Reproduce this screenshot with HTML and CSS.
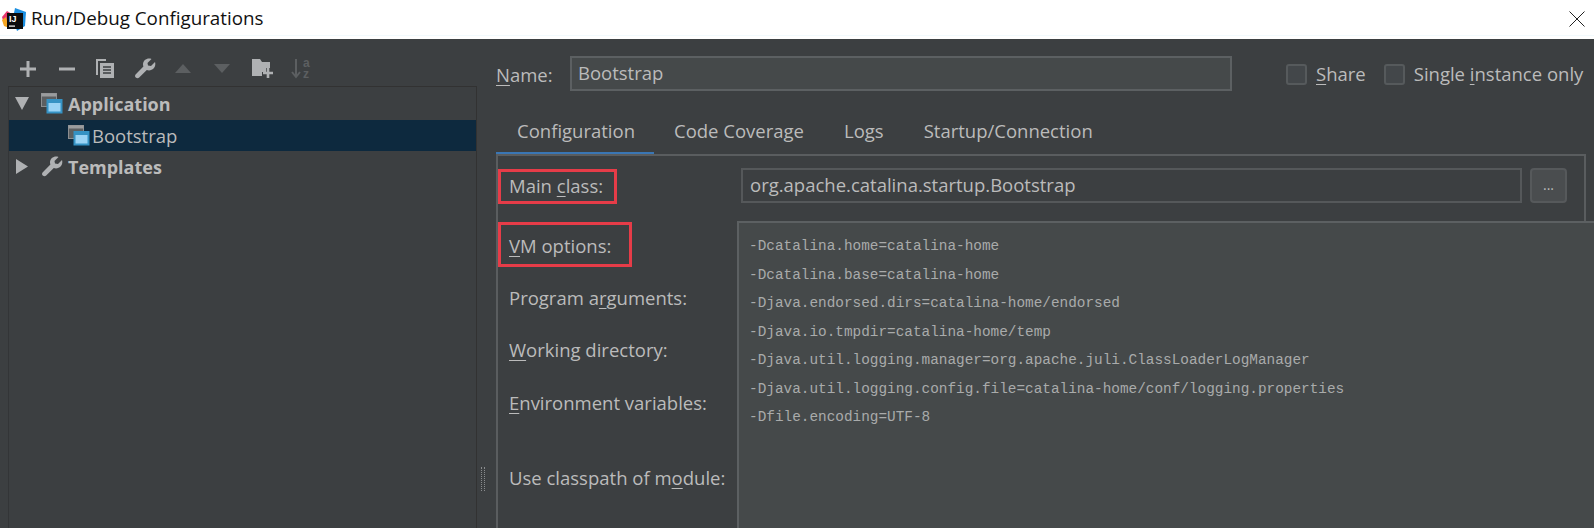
FILE: index.html
```html
<!DOCTYPE html>
<html lang="en">
<head>
<meta charset="utf-8">
<title>Run/Debug Configurations</title>
<link rel="stylesheet" href="styles.css">
</head>
<body>
<header class="titlebar">
  <svg class="logo" width="26" height="26" viewBox="0 0 26 26">
    <path d="M1 11 L6 5 L11 8 L9 20 L3 18Z" fill="#e8386f"/>
    <path d="M1 14 L5 11 L8 22 L3 20Z" fill="#f5a623"/>
    <path d="M14 2 L25 6 L24 20 L16 25 L12 12Z" fill="#1c8fe0"/>
    <rect x="6" y="7" width="16" height="16" fill="#0c0c0c"/>
    <text x="8" y="16" class="logo-text">IJ</text>
    <rect x="8" y="19.5" width="6" height="1.2" fill="#fff"/>
  </svg>
  <span class="title">Run/Debug Configurations</span>
  <svg class="close" width="16" height="16" viewBox="0 0 16 16"><path d="M0.5 0.5 L15.5 15.5 M15.5 0.5 L0.5 15.5" stroke="#222" stroke-width="1" fill="none"/></svg>
</header>

<main class="body">
  <aside class="left">
    <div class="toolbar">
      <svg class="tool t-plus" width="16" height="16" viewBox="0 0 16 16"><path d="M8 0V16M0 8H16" stroke="#afb1b3" stroke-width="3"/></svg>
      <svg class="tool t-minus" width="16" height="16" viewBox="0 0 16 16"><path d="M0 8H16" stroke="#afb1b3" stroke-width="3"/></svg>
      <svg class="tool t-copy" width="19" height="20" viewBox="0 0 19 20"><path d="M0 0H10V2H2V16H0Z" fill="#afb1b3"/><path d="M4 4H18V19H4Z" fill="#afb1b3"/><path d="M7 8H15M7 11H15M7 14H15" stroke="#3c3f41" stroke-width="1.4"/></svg>
      <svg class="tool t-wrench" width="21" height="21" viewBox="0 0 21 21"><path d="M20 4 L16 8 L13 7.5 L12.5 5 L16.5 1 C12.5 -0.5 8 2 8 6.5 C8 7.3 8.2 8 8.4 8.6 L0.8 16.2 C-0.2 17.2 -0.2 18.6 0.8 19.6 C1.8 20.6 3.2 20.6 4.2 19.6 L11.8 12 C12.5 12.3 13.2 12.4 14 12.4 C18.5 12.4 21.3 8 20 4Z" fill="#afb1b3"/></svg>
      <svg class="tool t-up" width="16" height="9" viewBox="0 0 16 9"><path d="M8 0L16 9H0Z" fill="#5c5f61"/></svg>
      <svg class="tool t-down" width="16" height="9" viewBox="0 0 16 9"><path d="M0 0H16L8 9Z" fill="#5c5f61"/></svg>
      <svg class="tool t-folder" width="22" height="19" viewBox="0 0 22 19"><path d="M0 0H8L10 3H18V9H14V13H10V17H0Z" fill="#afb1b3"/><path d="M16 9V19M11 14H21" stroke="#afb1b3" stroke-width="2.6"/></svg>
      <svg class="tool t-sort" width="21" height="28" viewBox="0 -4 21 28"><path d="M5 0V17M1 13L5 18L9 13" stroke="#5c5f61" stroke-width="2" fill="none"/><text x="12" y="8" class="sort-text">a</text><text x="12" y="19" class="sort-text">z</text></svg>
    </div>
    <div class="tree">
      <div class="node">
        <svg class="arrow" width="14" height="13" viewBox="0 0 14 13"><path d="M0 0H14L7 13Z" fill="#afb1b3"/></svg>
        <svg class="app-icon" width="22" height="21" viewBox="0 0 22 21"><rect x="0.5" y="0.5" width="15" height="13" fill="#5c5f61" stroke="#8c8e90"/><rect x="0.5" y="0.5" width="15" height="3" fill="#9a9c9e"/><rect x="5.5" y="6" width="16" height="14.5" fill="#3592c4"/><rect x="7.5" y="10" width="12" height="8.5" fill="#9ad3f5"/></svg>
        <span class="strong">Application</span>
      </div>
      <div class="node selected">
        <svg class="app-icon" width="22" height="21" viewBox="0 0 22 21"><rect x="0.5" y="0.5" width="15" height="13" fill="#5c5f61" stroke="#8c8e90"/><rect x="0.5" y="0.5" width="15" height="3" fill="#9a9c9e"/><rect x="5.5" y="6" width="16" height="14.5" fill="#3592c4"/><rect x="7.5" y="10" width="12" height="8.5" fill="#9ad3f5"/></svg>
        <span>Bootstrap</span>
      </div>
      <div class="node">
        <svg class="arrow arrow-right" width="12" height="15" viewBox="0 0 12 15"><path d="M0 0L12 7.5L0 15Z" fill="#afb1b3"/></svg>
        <svg class="tmpl-icon" width="21" height="21" viewBox="0 0 21 21"><path d="M20 4 L16 8 L13 7.5 L12.5 5 L16.5 1 C12.5 -0.5 8 2 8 6.5 C8 7.3 8.2 8 8.4 8.6 L0.8 16.2 C-0.2 17.2 -0.2 18.6 0.8 19.6 C1.8 20.6 3.2 20.6 4.2 19.6 L11.8 12 C12.5 12.3 13.2 12.4 14 12.4 C18.5 12.4 21.3 8 20 4Z" fill="#afb1b3"/></svg>
        <span class="strong">Templates</span>
      </div>
    </div>
  </aside>

  <div class="splitter"><span class="grip"></span></div>

  <section class="right">
    <div class="name-row">
      <label class="name-label"><u>N</u>ame:</label>
      <div class="name-input">Bootstrap</div>
      <span class="check check-first"></span><span class="check-label"><u>S</u>hare</span>
      <span class="check check-second"></span><span class="check-label">Single <u>i</u>nstance only</span>
    </div>

    <nav class="tabs">
      <span class="tab active">Configuration</span>
      <span class="tab">Code Coverage</span>
      <span class="tab">Logs</span>
      <span class="tab">Startup/Connection</span>
    </nav>

    <div class="panel">
      <div class="main-row">
        <span class="field-label">Main <u>c</u>lass:</span>
        <div class="class-input">org.apache.catalina.startup.Bootstrap</div>
        <span class="browse">...</span>
      </div>
      <div class="fields">
        <div class="field-row"><span class="field-label"><u>V</u>M options:</span></div>
        <div class="field-row"><span class="field-label">Program a<u>r</u>guments:</span></div>
        <div class="field-row field-row-tall"><span class="field-label"><u>W</u>orking directory:</span></div>
        <div class="field-row"><span class="field-label"><u>E</u>nvironment variables:</span></div>
        <div class="field-row field-row-gap"><span class="field-label">Use classpath of m<u>o</u>dule:</span></div>
      </div>
    </div>

    <div class="mark mark-main"></div>
    <div class="mark mark-vm"></div>

    <div class="vm-popup">
      <div>-Dcatalina.home=catalina-home</div>
      <div>-Dcatalina.base=catalina-home</div>
      <div>-Djava.endorsed.dirs=catalina-home/endorsed</div>
      <div>-Djava.io.tmpdir=catalina-home/temp</div>
      <div>-Djava.util.logging.manager=org.apache.juli.ClassLoaderLogManager</div>
      <div>-Djava.util.logging.config.file=catalina-home/conf/logging.properties</div>
      <div>-Dfile.encoding=UTF-8</div>
    </div>
  </section>
</main>
</body>
</html>
```
FILE: styles.css
```css
* { box-sizing: border-box; }
html, body { margin: 0; padding: 0; height: 528px; overflow: hidden; }
body {
  width: 1594px;
  background: #3c3f41;
  color: #bbbbbb;
  font-family: "Open Sans", "Noto Sans", sans-serif;
  font-size: 18.5px;
  display: flex;
  flex-direction: column;
}
u { text-underline-offset: 3px; text-decoration-thickness: 1px; }

.titlebar {
  height: 39px;
  flex: none;
  background: #fff;
  border-bottom: 3px solid #fff;
  box-shadow: inset 0 -1px 0 #f2fafd;
  display: flex;
  align-items: center;
  color: #111;
}
.logo { margin-left: 1px; margin-top: 1px; flex: none; }
.logo-text { font: bold 9px "Liberation Sans", sans-serif; fill: #fff; }
.title { margin-left: 4px; font-size: 18.8px; }
.close { margin-left: auto; margin-right: 9px; margin-top: 1px; }

.body { flex: 1; display: flex; min-height: 0; }

.left { width: 477px; flex: none; padding-left: 8px; display: flex; flex-direction: column; }
.toolbar { height: 47px; flex: none; display: flex; align-items: center; padding-top: 12px; }
.tool { flex: none; }
.t-plus { margin-left: 12px; }
.t-minus { margin-left: 23px; }
.t-copy { margin-left: 21px; }
.t-wrench { margin-left: 20px; }
.t-up { margin-left: 19px; }
.t-down { margin-left: 23px; }
.t-folder { margin-left: 22px; }
.t-sort { margin-left: 17px; }
.sort-text { font: bold 12px "Liberation Sans", sans-serif; fill: #5c5f61; }

.tree { flex: 1; border: 1px solid #323232; border-bottom: 0; border-left-color: #333537; padding-top: 1px; }
.node { height: 31.5px; display: flex; align-items: center; color: #bbb; }
.strong { font-weight: 700; font-size: 18px; margin-left: 5px; }
.arrow { margin-left: 6px; }
.arrow-right { margin-left: 7px; }
.app-icon { margin-left: 12px; }
.tmpl-icon { margin-left: 14px; }
.selected { background: #0d293e; }
.selected .app-icon { margin-left: 59px; }
.selected span { margin-left: 2px; }

.splitter { width: 19px; flex: none; padding-top: 428px; padding-left: 4px; }
.grip { display: block; width: 4px; height: 24px; border-left: 1.5px dotted #8a8c8e; border-right: 1.5px dotted #8a8c8e; }

.right { flex: 1; min-width: 0; position: relative; display: flex; flex-direction: column; }

.name-row { height: 35px; margin-top: 17px; flex: none; display: flex; align-items: center; }
.name-label { width: 74px; flex: none; margin-top: 1px; }
.name-input {
  width: 662px;
  height: 35px;
  flex: none;
  background: #45494a;
  border: 2px solid #5c6062;
  padding-left: 6px;
  line-height: 29px;
}
.check {
  width: 21px;
  height: 21px;
  flex: none;
  border: 2px solid #565a5c;
  border-radius: 3px;
  background: #43474a;
  margin-top: 2px;
}
.check-first { margin-left: 54px; }
.check-second { margin-left: 18px; }
.check-label { margin-left: 9px; white-space: nowrap; }

.tabs { height: 46px; margin-top: 18px; flex: none; display: flex; }
.tab { padding: 0 20px; line-height: 44px; white-space: nowrap; }
.tabs .tab:first-child { padding: 0 19px 0 21px; }
.active { box-shadow: inset 0 -3px 0 #3a76b4; }

.panel {
  flex: 1;
  margin-right: 8px;
  margin-top: -1px;
  border: 2px solid #5a5d5f;
  border-bottom: 0;
  padding-top: 12px;
}
.main-row { display: flex; align-items: center; height: 35px; padding-right: 17px; }
.field-label { padding-left: 11px; white-space: nowrap; }
.main-row .field-label { width: 243px; flex: none; }
.class-input {
  flex: 1;
  height: 35px;
  border: 2px solid #55585a;
  padding-left: 7px;
  line-height: 29px;
}
.browse {
  width: 37px;
  height: 35px;
  flex: none;
  margin-left: 8px;
  border: 2px solid #56595b;
  border-radius: 4px;
  background: #4a4d4f;
  text-align: center;
  line-height: 29px;
  font-size: 14px;
}
.fields { padding-top: 16px; }
.field-row { height: 52px; display: flex; align-items: center; }
.field-row-tall { height: 53px; }
.field-row-gap { margin-top: 23px; }

.mark { position: absolute; left: 2px; border: 3px solid #e63c48; }
.mark-main { top: 130px; width: 119px; height: 35px; }
.mark-vm { top: 183px; width: 134px; height: 45px; }

.vm-popup {
  position: absolute;
  left: 241px;
  top: 182px;
  right: 0;
  bottom: 0;
  background: #45494a;
  border-top: 2px solid #5c6062;
  border-left: 2px solid #5c6062;
  padding: 9px 0 0 10px;
  font-family: "Liberation Mono", monospace;
  font-size: 14.38px;
  line-height: 28.5px;
  color: #a9abab;
  white-space: nowrap;
}
```
